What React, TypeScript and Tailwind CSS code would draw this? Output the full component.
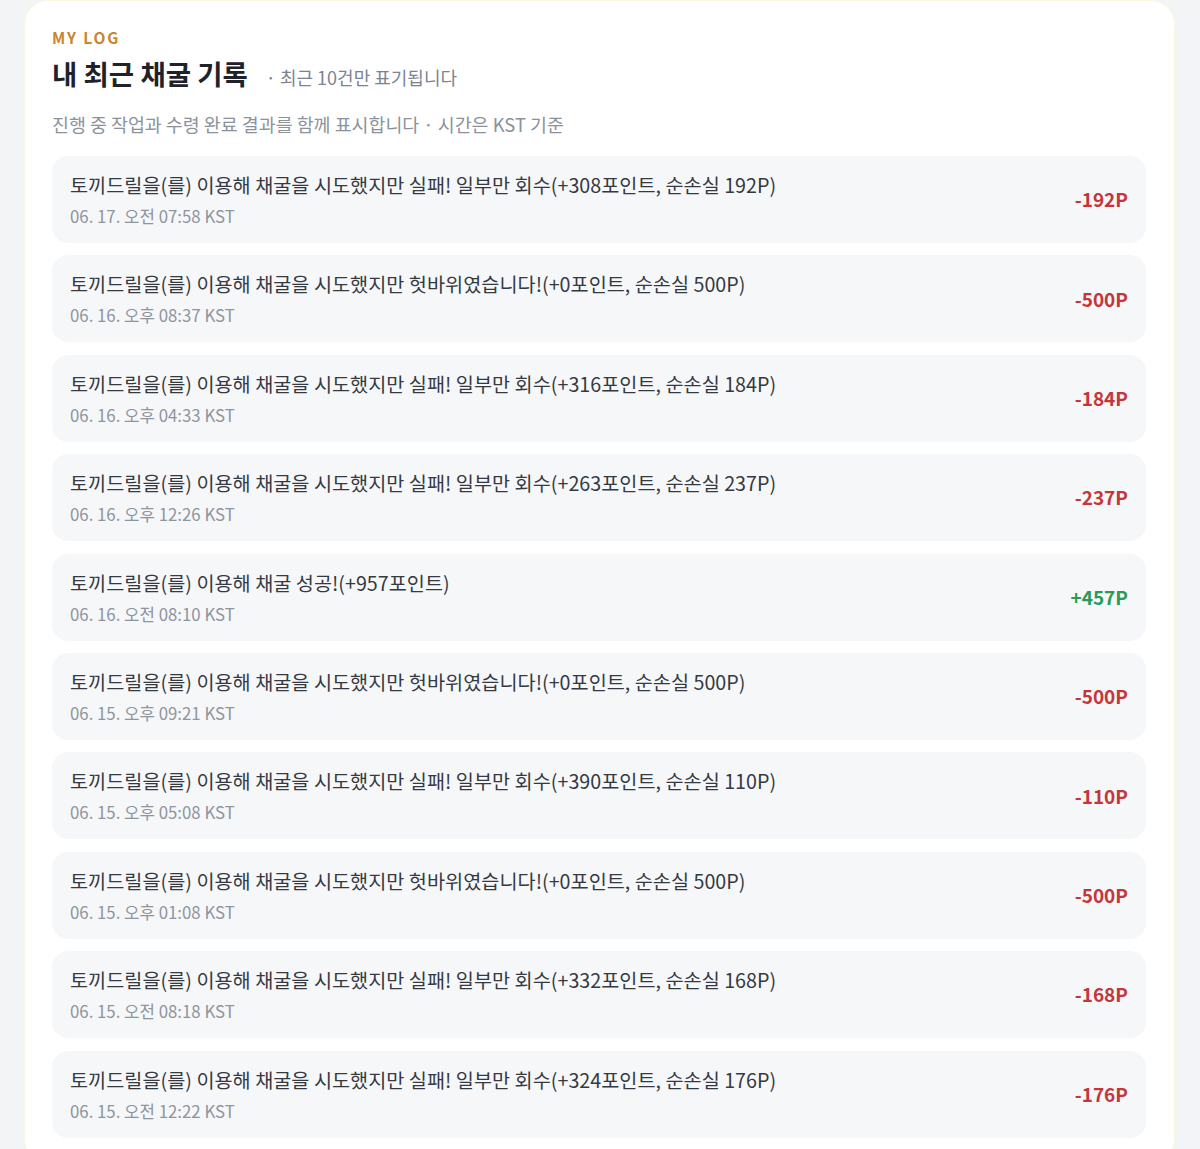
const logs = [
  { text: '토끼드릴을(를) 이용해 채굴을 시도했지만 실패! 일부만 회수(+308포인트, 순손실 192P)', date: '06. 17. 오전 07:58 KST', amount: '-192P' },
  { text: '토끼드릴을(를) 이용해 채굴을 시도했지만 헛바위였습니다!(+0포인트, 순손실 500P)', date: '06. 16. 오후 08:37 KST', amount: '-500P' },
  { text: '토끼드릴을(를) 이용해 채굴을 시도했지만 실패! 일부만 회수(+316포인트, 순손실 184P)', date: '06. 16. 오후 04:33 KST', amount: '-184P' },
  { text: '토끼드릴을(를) 이용해 채굴을 시도했지만 실패! 일부만 회수(+263포인트, 순손실 237P)', date: '06. 16. 오후 12:26 KST', amount: '-237P' },
  { text: '토끼드릴을(를) 이용해 채굴 성공!(+957포인트)', date: '06. 16. 오전 08:10 KST', amount: '+457P' },
  { text: '토끼드릴을(를) 이용해 채굴을 시도했지만 헛바위였습니다!(+0포인트, 순손실 500P)', date: '06. 15. 오후 09:21 KST', amount: '-500P' },
  { text: '토끼드릴을(를) 이용해 채굴을 시도했지만 실패! 일부만 회수(+390포인트, 순손실 110P)', date: '06. 15. 오후 05:08 KST', amount: '-110P' },
  { text: '토끼드릴을(를) 이용해 채굴을 시도했지만 헛바위였습니다!(+0포인트, 순손실 500P)', date: '06. 15. 오후 01:08 KST', amount: '-500P' },
  { text: '토끼드릴을(를) 이용해 채굴을 시도했지만 실패! 일부만 회수(+332포인트, 순손실 168P)', date: '06. 15. 오전 08:18 KST', amount: '-168P' },
  { text: '토끼드릴을(를) 이용해 채굴을 시도했지만 실패! 일부만 회수(+324포인트, 순손실 176P)', date: '06. 15. 오전 12:22 KST', amount: '-176P' },
];

export default function App() {
  return (
    <div
      className="min-h-[1149px] bg-[#f3f4f6] pl-6 pr-[25px]"
      style={{ fontFamily: '"Noto Sans CJK KR", "Noto Sans", sans-serif' }}
    >
      <section className="rounded-[24px] border border-[#fbf5e4] bg-white pl-[27px] pr-7 pt-[26px] pb-6">
        <p className="text-[15.5px] font-bold leading-5 tracking-[0.12em] text-[#c8862e]">MY LOG</p>
        <div className="mt-[10px] flex items-baseline gap-[18px]">
          <h2 className="text-[27.5px] font-bold leading-8 text-[#1f2329]">내 최근 채굴 기록</h2>
          <span className="text-[18px] text-[#7b8490]">· 최근 10건만 표기됩니다</span>
        </div>
        <p className="mt-[21px] text-[18.4px] leading-6 text-[#8a929c]">
          진행 중 작업과 수령 완료 결과를 함께 표시합니다 · 시간은 KST 기준
        </p>
        <ul className="mt-5 flex flex-col gap-[12.4px]">
          {logs.map((log, i) => (
            <li
              key={i}
              className="flex h-[87px] items-center justify-between rounded-2xl bg-[#f6f7f9] pl-[18px] pr-[18px]"
            >
              <div className="flex flex-col">
                <span className="text-[19.7px] leading-7 text-[#353a42]">{log.text}</span>
                <span className="mt-[5px] text-[16.8px] leading-6 text-[#8e959e]">{log.date}</span>
              </div>
              <span
                className={
                  log.amount.startsWith('+')
                    ? 'text-[19px] font-bold text-[#2b9a55]'
                    : 'text-[19px] font-bold text-[#c5363a]'
                }
              >
                {log.amount}
              </span>
            </li>
          ))}
        </ul>
      </section>
    </div>
  );
}
